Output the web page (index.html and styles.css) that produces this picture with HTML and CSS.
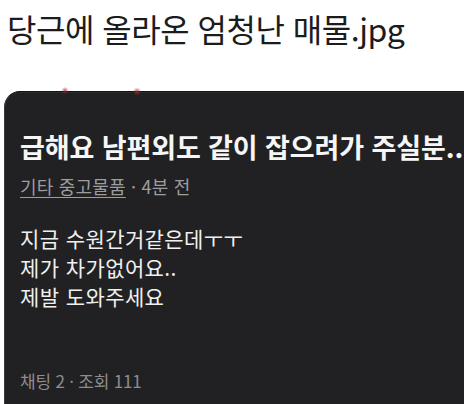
FILE: index.html
```html
<!DOCTYPE html>
<html lang="ko">
<head>
    <meta charset="UTF-8">
    <meta name="viewport" content="width=device-width, initial-scale=1.0">
    <title>당근에 올라온 엄청난 매물.jpg</title>
    <link rel="stylesheet" href="styles.css">
</head>
<body>
    <h1 class="post-title">당근에 올라온 엄청난 매물.jpg</h1>

    <div class="shot">
        <span class="smudge smudge-left"></span>
        <span class="smudge smudge-right"></span>
        <div class="card">
            <h2 class="card-title">급해요 남편외도 같이 잡으려가 주실분..</h2>
            <p class="card-meta"><span class="category">기타 중고물품</span> · 4분 전</p>
            <p class="card-body">지금 수원간거같은데ㅜㅜ<br>제가 차가없어요..<br>제발 도와주세요</p>
            <p class="card-stats">채팅 2 · 조회 111</p>
        </div>
    </div>
</body>
</html>
```

FILE: styles.css
```css
html, body {
    margin: 0;
    padding: 0;
    background: #ffffff;
    overflow: hidden;
}
body {
    width: 464px;
    height: 404px;
    font-family: "Noto Sans CJK KR", "Noto Sans", sans-serif;
}
.post-title {
    margin: 0;
    padding: 6px 0 0 7px;
    font-size: 32px;
    line-height: 44px;
    font-weight: 400;
    color: #1c1c1c;
    letter-spacing: -0.5px;
    white-space: nowrap;
}
.shot {
    position: relative;
    margin-top: 41px;
    padding-left: 4px;
}
.smudge {
    position: absolute;
    top: -4px;
    width: 8px;
    height: 7px;
    border-radius: 50%;
    background: radial-gradient(circle, rgba(170, 40, 50, 0.75), rgba(170, 40, 50, 0) 70%);
    z-index: 1;
}
.smudge-left {
    left: 61px;
}
.smudge-right {
    left: 133px;
    height: 9px;
}
.card {
    height: 313px;
    box-sizing: border-box;
    background: #212123;
    border-top: 1px solid #121213;
    border-left: 1px solid #3a3a3c;
    border-top-left-radius: 16px;
    box-shadow: inset 0 1px 0 #2b2b2d;
    padding: 37px 0 0 15px;
    color: #f2f2f2;
    white-space: nowrap;
    overflow: hidden;
}
.card-title {
    margin: 0;
    font-size: 27px;
    line-height: 36px;
    font-weight: 700;
    color: #f6f6f6;
    letter-spacing: -0.1px;
}
.card-meta {
    margin: 9px 0 0;
    font-size: 18px;
    line-height: 24px;
    color: #9d9d9f;
    letter-spacing: 0.2px;
}
.category {
    text-decoration: underline;
    text-underline-offset: 3px;
}
.card-body {
    margin: 26px 0 0;
    font-size: 21px;
    line-height: 29px;
    color: #f0f0f0;
    letter-spacing: 0.4px;
}
.card-stats {
    margin: 58px 0 0;
    font-size: 17px;
    line-height: 24px;
    color: #8d8d8f;
    letter-spacing: -0.2px;
}
```
